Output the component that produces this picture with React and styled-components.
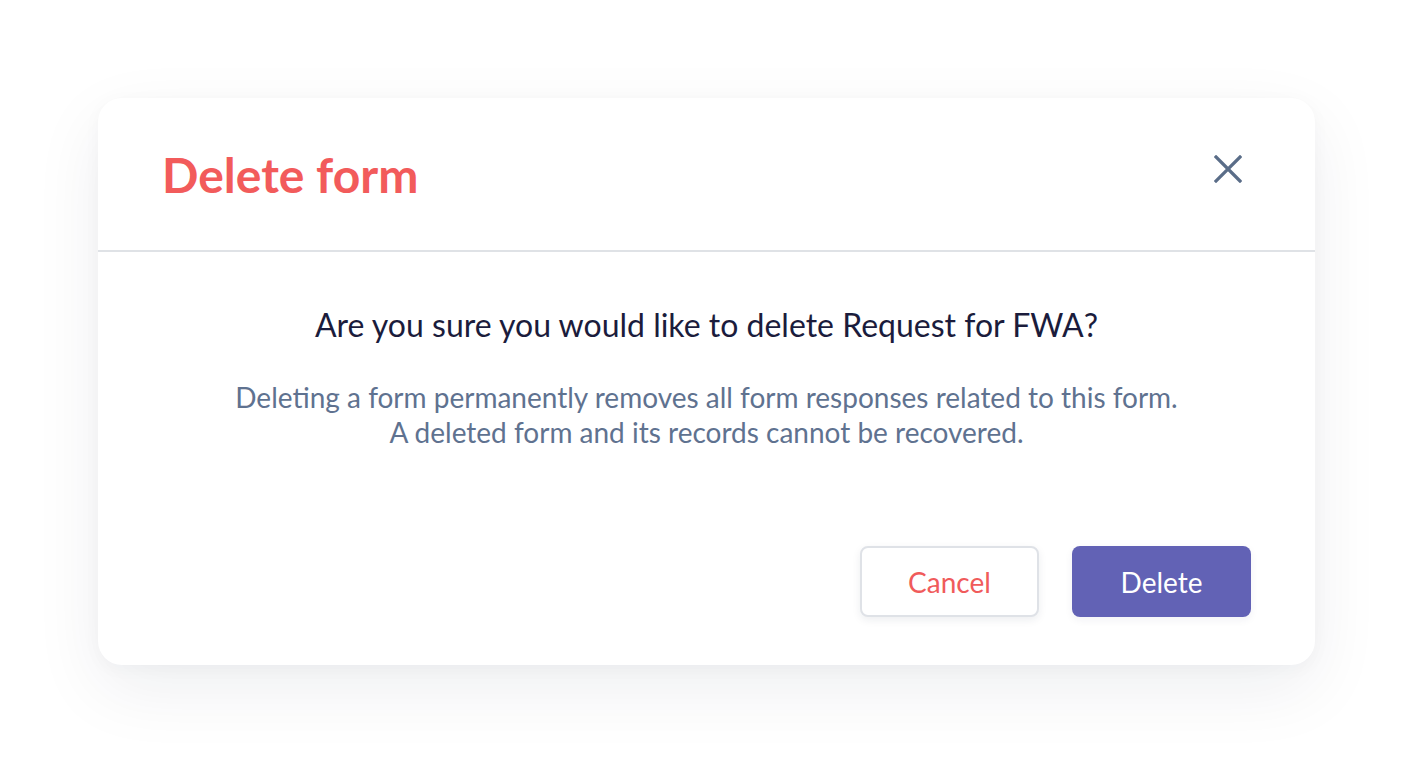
import React from "react";
import styled, { createGlobalStyle } from "styled-components";

const GlobalStyle = createGlobalStyle`
  html, body {
    margin: 0;
    padding: 0;
    background: #ffffff;
    font-family: Lato, "Open Sans", sans-serif;
  }
  * {
    box-sizing: border-box;
  }
`;

const Page = styled.div`
  width: 1418px;
  height: 768px;
  padding: 98px 103px 0 98px;
`;

const Modal = styled.div`
  width: 1217px;
  height: 567px;
  background: #ffffff;
  border-radius: 24px;
  box-shadow: 0 24px 70px rgba(20, 30, 60, 0.07), 0 4px 18px rgba(20, 30, 60, 0.03);
  display: flex;
  flex-direction: column;
  overflow: hidden;
`;

const Header = styled.div`
  height: 154px;
  border-bottom: 2px solid #dfe2e6;
  display: flex;
  align-items: center;
  justify-content: space-between;
  padding: 0 67px 0 64px;
`;

const Title = styled.h2`
  margin: 0;
  font-size: 48px;
  font-weight: 700;
  color: #f25b5b;
`;

const CloseButton = styled.button`
  width: 40px;
  height: 40px;
  border: none;
  background: none;
  padding: 0;
  margin-top: -10px;
  display: flex;
  align-items: center;
  justify-content: center;
  cursor: pointer;
`;

const Body = styled.div`
  flex: 1;
  display: flex;
  flex-direction: column;
  align-items: center;
  padding: 54px 64px 48px;
`;

const Question = styled.p`
  margin: 0;
  font-size: 32px;
  line-height: 38px;
  color: #1b1c3c;
`;

const Note = styled.p`
  margin: 36px 0 0;
  font-size: 28px;
  line-height: 35px;
  color: #5f7290;
  text-align: center;
`;

const Actions = styled.div`
  margin-top: auto;
  align-self: stretch;
  display: flex;
  justify-content: flex-end;
  gap: 33px;
`;

const Button = styled.button`
  width: 179px;
  height: 71px;
  border-radius: 8px;
  font-family: Lato, "Open Sans", sans-serif;
  font-size: 28px;
  cursor: pointer;
  border: ${(p) => (p.$primary ? "none" : "2px solid #dfe2e7")};
  background: ${(p) => (p.$primary ? "#6262b5" : "#ffffff")};
  color: ${(p) => (p.$primary ? "#ffffff" : "#f05b5b")};
  box-shadow: ${(p) => (p.$primary ? "0 3px 8px rgba(40, 40, 90, 0.06)" : "0 3px 8px rgba(30, 40, 70, 0.08)")};
`;

const CloseIcon = () => (
  <svg width="28" height="28" viewBox="0 0 28 28" fill="none">
    <path d="M2 2 L26 26 M26 2 L2 26" stroke="#5a6d88" strokeWidth="3.2" strokeLinecap="square" />
  </svg>
);

export default function App() {
  return (
    <>
      <GlobalStyle />
      <Page>
        <Modal>
          <Header>
            <Title>Delete form</Title>
            <CloseButton aria-label="Close">
              <CloseIcon />
            </CloseButton>
          </Header>
          <Body>
            <Question>Are you sure you would like to delete Request for FWA?</Question>
            <Note>
              Deleting a form permanently removes all form responses related to this form.
              <br />
              A deleted form and its records cannot be recovered.
            </Note>
            <Actions>
              <Button>Cancel</Button>
              <Button $primary>Delete</Button>
            </Actions>
          </Body>
        </Modal>
      </Page>
    </>
  );
}
